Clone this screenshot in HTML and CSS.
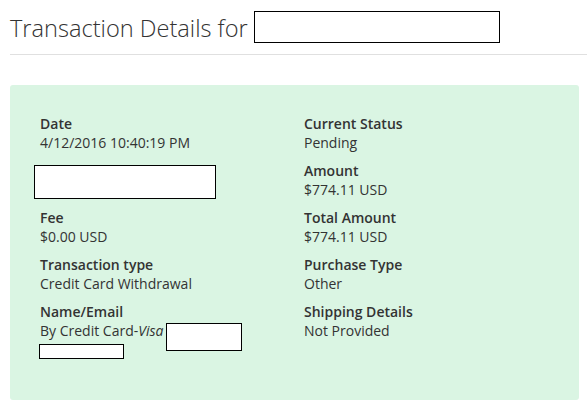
FILE: index.html
```html
<!DOCTYPE html>
<html lang="en">
<head>
<meta charset="utf-8">
<title>Transaction Details</title>
<link rel="stylesheet" href="styles.css">
</head>
<body>
<div class="page">
  <header class="page-header">
    <h1 class="title">Transaction Details for <span class="title-redact"></span></h1>
  </header>
  <section class="panel">
    <div class="col">
      <div class="field">
        <div class="label">Date</div>
        <div class="value">4/12/2016 10:40:19 PM</div>
      </div>
      <div class="field">
        <div class="label">&nbsp;</div>
        <div class="value">&nbsp;</div>
        <span class="redact redact-row"></span>
      </div>
      <div class="field">
        <div class="label">Fee</div>
        <div class="value">$0.00 USD</div>
      </div>
      <div class="field">
        <div class="label">Transaction type</div>
        <div class="value">Credit Card Withdrawal</div>
      </div>
      <div class="field">
        <div class="label">Name/Email</div>
        <div class="value">By Credit Card-<em>Visa</em><br>&nbsp;</div>
        <span class="redact redact-card"></span>
        <span class="redact redact-line"></span>
      </div>
    </div>
    <div class="col">
      <div class="field">
        <div class="label">Current Status</div>
        <div class="value">Pending</div>
      </div>
      <div class="field">
        <div class="label">Amount</div>
        <div class="value">$774.11 USD</div>
      </div>
      <div class="field">
        <div class="label">Total Amount</div>
        <div class="value">$774.11 USD</div>
      </div>
      <div class="field">
        <div class="label">Purchase Type</div>
        <div class="value">Other</div>
      </div>
      <div class="field">
        <div class="label">Shipping Details</div>
        <div class="value">Not Provided</div>
      </div>
    </div>
  </section>
</div>
</body>
</html>
```

FILE: styles.css
```css
html, body {
  margin: 0;
  padding: 0;
  background: #ffffff;
}

body {
  font-family: "Open Sans", "Liberation Sans", sans-serif;
  color: #333333;
}

.page {
  padding-left: 10px;
}

.page-header {
  border-bottom: 1px solid #e0e0e0;
  padding-top: 11px;
  padding-bottom: 10px;
}

.title {
  margin: 0;
  font-size: 23.6px;
  font-weight: 300;
  line-height: 32px;
  color: #333333;
}

.title-redact {
  display: inline-block;
  box-sizing: border-box;
  width: 246px;
  height: 32px;
  border: 1px solid #000000;
  background: #ffffff;
  vertical-align: -6px;
}

.panel {
  margin: 30px 8px 0 0;
  background: #daf5e3;
  border-radius: 3px;
  padding: 29px 30px 32px 30px;
  display: grid;
  grid-template-columns: 264px 1fr;
}

.field {
  position: relative;
  margin-bottom: 9px;
  font-size: 14px;
  line-height: 19px;
}

.label {
  font-weight: 600;
}

.value em {
  font-style: italic;
}

.redact {
  position: absolute;
  box-sizing: border-box;
  border: 1px solid #000000;
  background: #ffffff;
}

.redact-row {
  left: -6px;
  top: 4px;
  width: 182px;
  height: 34px;
}

.redact-card {
  left: 126px;
  top: 21px;
  width: 76px;
  height: 28px;
}

.redact-line {
  left: -1px;
  top: 42px;
  width: 85px;
  height: 15px;
}
```
